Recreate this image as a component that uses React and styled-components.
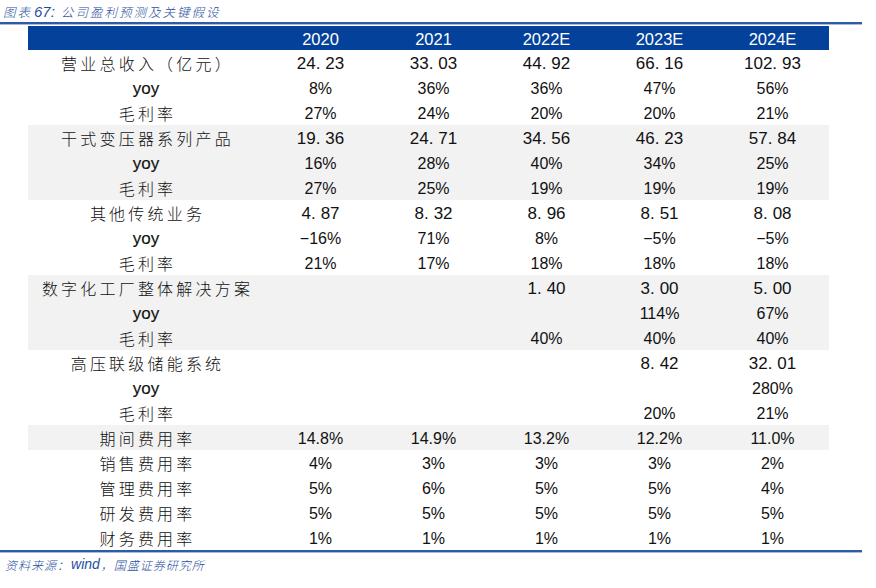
import React from 'react'
import styled, { createGlobalStyle } from 'styled-components'

const GlobalStyle = createGlobalStyle`
  body {
    margin: 0;
    background: #ffffff;
  }
`

const Page = styled.div`
  width: 876px;
  height: 588px;
  display: flex;
  flex-direction: column;
  background: #fff;
  overflow: hidden;
`

const Caption = styled.div`
  height: 22px;
  display: flex;
  align-items: center;
  padding-left: 3px;
  font-family: "Noto Sans CJK SC", sans-serif;
  font-style: italic;
  font-weight: 300;
  font-size: 12.5px;
  letter-spacing: 2px;
  color: #1f4e9e;
  & b {
    font-family: "Liberation Sans", sans-serif;
    font-weight: normal;
    font-size: 15px;
    letter-spacing: 0;
    margin: 0 6px 0 2px;
  }
`

const Rule = styled.div`
  width: 862px;
  height: 2px;
  background: #2f5ba6;
  border-bottom: 1px solid #a9bcdd;
  flex-shrink: 0;
`

const Table = styled.div`
  margin: 1px 0 0 28px;
  width: 801px;
  display: flex;
  flex-direction: column;
`

const Row = styled.div`
  display: grid;
  grid-template-columns: 236px repeat(5, 113px);
  height: ${p => (p.$head ? 24 : 25)}px;
  align-items: center;
  background: ${p => (p.$head ? '#03419a' : p.$shaded ? '#f2f2f2' : '#ffffff')};
  color: ${p => (p.$head ? '#ffffff' : '#111111')};
`

const HeadCell = styled.div`
  text-align: center;
  font-family: "Liberation Sans", Arial, sans-serif;
  font-size: 16.5px;
  padding-top: 2px;
`

const Label = styled.div`
  text-align: center;
  font-family: ${p => (p.$latin ? '"Liberation Sans", Arial, sans-serif' : '"Noto Sans CJK SC", sans-serif')};
  font-size: ${p => (p.$latin ? '17px' : '16px')};
  letter-spacing: ${p => (p.$latin ? '0' : '3.2px')};
  font-weight: ${p => (p.$latin ? 'normal' : '300')};
  -webkit-text-stroke: ${p => (p.$latin ? '0.15px #111' : '0')};
  padding: ${p => (p.$latin ? '3px 0 0 0' : '0 0 0 3px')};
`

const Value = styled.div`
  text-align: center;
  font-family: "Liberation Sans", Arial, sans-serif;
  font-size: ${p => (p.$wide ? '17px' : '16px')};
  padding-top: 3px;
`

const Dot = styled.span`
  margin-right: 5px;
`

const Foot = styled.div`
  height: 22px;
  display: flex;
  align-items: center;
  padding-left: 5px;
  font-family: "Noto Sans CJK SC", sans-serif;
  font-style: italic;
  font-weight: 300;
  font-size: 12px;
  letter-spacing: 1px;
  color: #1f4e9e;
  & b {
    font-family: "Liberation Sans", sans-serif;
    font-weight: normal;
    font-size: 14px;
    letter-spacing: 0;
    margin: 0 1px;
  }
`

const years = ['2020', '2021', '2022E', '2023E', '2024E']

const rows = [
  { label: '营业总收入（亿元）', values: ['24.23', '33.03', '44.92', '66.16', '102.93'], wide: true },
  { label: 'yoy', values: ['8%', '36%', '36%', '47%', '56%'] },
  { label: '毛利率', values: ['27%', '24%', '20%', '20%', '21%'] },
  { label: '干式变压器系列产品', values: ['19.36', '24.71', '34.56', '46.23', '57.84'], wide: true, shaded: true },
  { label: 'yoy', values: ['16%', '28%', '40%', '34%', '25%'], shaded: true },
  { label: '毛利率', values: ['27%', '25%', '19%', '19%', '19%'], shaded: true },
  { label: '其他传统业务', values: ['4.87', '8.32', '8.96', '8.51', '8.08'], wide: true },
  { label: 'yoy', values: ['−16%', '71%', '8%', '−5%', '−5%'] },
  { label: '毛利率', values: ['21%', '17%', '18%', '18%', '18%'] },
  { label: '数字化工厂整体解决方案', values: ['', '', '1.40', '3.00', '5.00'], wide: true, shaded: true },
  { label: 'yoy', values: ['', '', '', '114%', '67%'], shaded: true },
  { label: '毛利率', values: ['', '', '40%', '40%', '40%'], shaded: true },
  { label: '高压联级储能系统', values: ['', '', '', '8.42', '32.01'], wide: true },
  { label: 'yoy', values: ['', '', '', '', '280%'] },
  { label: '毛利率', values: ['', '', '', '20%', '21%'] },
  { label: '期间费用率', values: ['14.8%', '14.9%', '13.2%', '12.2%', '11.0%'], shaded: true },
  { label: '销售费用率', values: ['4%', '3%', '3%', '3%', '2%'] },
  { label: '管理费用率', values: ['5%', '6%', '5%', '5%', '4%'] },
  { label: '研发费用率', values: ['5%', '5%', '5%', '5%', '5%'] },
  { label: '财务费用率', values: ['1%', '1%', '1%', '1%', '1%'] },
]

// wide-dot numbers: "24.23" drawn with a gap after the point
function Num({ v, wide }) {
  if (!wide || !v.includes('.')) return v
  const [a, b] = v.split('.')
  return (
    <>
      {a}<Dot>.</Dot>{b}
    </>
  )
}

export default function App() {
  return (
    <Page>
      <GlobalStyle />
      <Caption>图表<b>67:</b>公司盈利预测及关键假设</Caption>
      <Rule />
      <Table>
        <Row $head>
          <HeadCell />
          {years.map(y => <HeadCell key={y}>{y}</HeadCell>)}
        </Row>
        {rows.map((r, i) => (
          <Row key={i} $shaded={r.shaded}>
            <Label $latin={r.label === 'yoy'}>{r.label}</Label>
            {r.values.map((v, j) => (
              <Value key={j} $wide={r.wide}>
                <Num v={v} wide={r.wide} />
              </Value>
            ))}
          </Row>
        ))}
      </Table>
      <Rule />
      <Foot>资料来源：<b>wind</b>，国盛证券研究所</Foot>
    </Page>
  )
}
